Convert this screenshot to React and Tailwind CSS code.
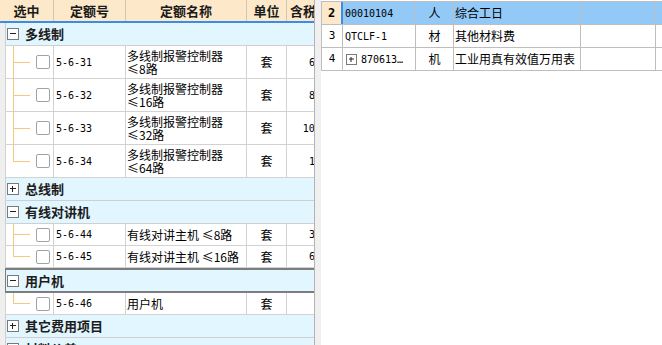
import React from 'react';

const groups = [
  {
    name: '多线制',
    open: true,
    items: [
      { code: '5-6-31', name: ['多线制报警控制器', '≤8路'], unit: '套', price: '658.00' },
      { code: '5-6-32', name: ['多线制报警控制器', '≤16路'], unit: '套', price: '865.00' },
      { code: '5-6-33', name: ['多线制报警控制器', '≤32路'], unit: '套', price: '1058.00' },
      { code: '5-6-34', name: ['多线制报警控制器', '≤64路'], unit: '套', price: '158.00' },
    ],
  },
  { name: '总线制', open: false, items: [] },
  {
    name: '有线对讲机',
    open: true,
    items: [
      { code: '5-6-44', name: ['有线对讲主机 ≤8路'], unit: '套', price: '358.00' },
      { code: '5-6-45', name: ['有线对讲主机 ≤16路'], unit: '套', price: '658.00' },
    ],
  },
  {
    name: '用户机',
    open: true,
    focused: true,
    items: [{ code: '5-6-46', name: ['用户机'], unit: '套', price: '' }],
  },
  { name: '其它费用项目', open: false, items: [] },
  { name: '材料价差', open: false, items: [] },
];

const resources = [
  { idx: '2', code: '00010104', type: '人', name: '综合工日', selected: true },
  { idx: '3', code: 'QTCLF-1', type: '材', name: '其他材料费' },
  { idx: '4', code: '870613…', type: '机', name: '工业用真有效值万用表', expand: true },
];

const Expander = ({ open, size = 12 }) => (
  <svg width={size} height={size} viewBox={`0 0 ${size} ${size}`} className="shrink-0">
    <rect x="0.5" y="0.5" width={size - 1} height={size - 1} fill="#fff" stroke="#7a7a7a" />
    <line x1="3" y1={size / 2 - 0.5} x2={size - 3} y2={size / 2 - 0.5} stroke="#222" />
    {!open && <line x1={size / 2 - 0.5} y1="3" x2={size / 2 - 0.5} y2={size - 3} stroke="#222" />}
  </svg>
);

const TreeLink = ({ last }) => (
  <div className="flex flex-col w-[17px] ml-[7px] self-stretch shrink-0">
    <div className="flex-1 border-l border-b border-[#f8c77e]" />
    <div className={last ? 'flex-1' : 'flex-1 border-l border-[#f8c77e]'} />
  </div>
);

const GroupRow = ({ group }) => (
  <div
    className={
      group.focused
        ? 'flex items-center h-[25px] shrink-0 border-t-2 border-b-2 border-l border-[#7d7d7d] bg-[#e1f6fe] pl-px'
        : 'flex items-center h-[23px] shrink-0 border-b border-l border-[#cfcfcf] bg-[#e1f6fe] pl-px'
    }
  >
    <Expander open={group.open} />
    <span className="ml-[6px] text-[13px] font-bold text-[#1c1c1c] whitespace-nowrap">{group.name}</span>
  </div>
);

const ItemRow = ({ item, last }) => {
  const tall = item.name.length > 1;
  return (
    <div
      className={
        tall
          ? 'flex h-[33px] shrink-0 border-b border-l border-[#d2d2d2] bg-white'
          : 'flex h-[22px] shrink-0 border-b border-l border-[#d2d2d2] bg-white'
      }
    >
      <div className="flex items-center w-[48px] shrink-0 border-r border-[#d2d2d2]">
        <TreeLink last={last} />
        <div className="ml-[6px] w-[14px] h-[14px] rounded-[2px] border border-[#a3a3a3] bg-white" />
      </div>
      <div className="flex items-center w-[72px] shrink-0 border-r border-[#d2d2d2] pl-[2px] font-['DejaVu_Sans_Mono',monospace] text-[10px] text-black">
        {item.code}
      </div>
      <div className="flex flex-col justify-center w-[121px] shrink-0 border-r border-[#d2d2d2] pl-px text-[12px] leading-[13px] text-black">
        {item.name.map((line) => (
          <span key={line} className="whitespace-nowrap">{line}</span>
        ))}
      </div>
      <div className="flex items-center justify-center w-[40px] shrink-0 border-r border-[#d2d2d2] text-[12px] text-black">
        {item.unit}
      </div>
      <div className="flex items-center justify-end w-[60px] shrink-0 pr-[2px] font-['DejaVu_Sans_Mono',monospace] text-[10px] text-black">
        {item.price}
      </div>
    </div>
  );
};

const LeftGrid = () => (
  <div className="flex flex-col w-[315px] shrink-0 h-full overflow-hidden border-r border-[#b3b3b3]">
    <div className="flex h-[23px] shrink-0 bg-[#fde9c9] border-b-2 border-[#3a8de6] text-[13px] font-bold text-[#1a1a1a]">
      <div className="flex items-center justify-center w-[54px] shrink-0 border-r border-[#d3c6b0]">选中</div>
      <div className="flex items-center justify-center w-[72px] shrink-0 border-r border-[#d3c6b0]">定额号</div>
      <div className="flex items-center justify-center w-[121px] shrink-0 border-r border-[#d3c6b0]">定额名称</div>
      <div className="flex items-center justify-center w-[40px] shrink-0 border-r border-[#d3c6b0]">单位</div>
      <div className="flex items-center pl-[3px] whitespace-nowrap">含税单价</div>
    </div>
    <div className="flex flex-1 min-h-0">
      <div className="w-[5px] shrink-0 bg-[#efefef]" />
      <div className="flex flex-col flex-1 min-w-0">
        {groups.map((g) => (
          <React.Fragment key={g.name}>
            <GroupRow group={g} />
            {g.open &&
              g.items.map((item, i) => (
                <ItemRow key={item.code} item={item} last={i === g.items.length - 1} />
              ))}
          </React.Fragment>
        ))}
      </div>
    </div>
  </div>
);

const RightGrid = () => (
  <div className="flex-1 min-w-0 pt-px">
    <div className="border-t border-l border-[#bebebe] text-[12px] text-black">
      {resources.map((r) => (
        <div
          key={r.idx}
          className={
            r.selected
              ? 'flex h-[23px] border-b border-[#bebebe] bg-[#93c9f7]'
              : 'flex h-[23px] border-b border-[#bebebe] bg-white'
          }
        >
          <div
            className={
              r.selected
                ? "flex items-center justify-center w-[21px] shrink-0 bg-[#fde9c9] border-r-2 border-[#3a8de6] font-bold font-['DejaVu_Sans_Mono',monospace] text-[12px]"
                : "flex items-center justify-center w-[21px] shrink-0 border-r border-[#bebebe] font-['DejaVu_Sans_Mono',monospace] text-[11px]"
            }
          >
            {r.idx}
          </div>
          <div className="flex items-center w-[73px] shrink-0 border-r border-[#bebebe] pl-[2px] font-['DejaVu_Sans_Mono',monospace] text-[10px] whitespace-nowrap overflow-hidden">
            {r.expand && (
              <span className="mr-[4px] ml-px flex">
                <Expander open={false} size={11} />
              </span>
            )}
            {r.code}
          </div>
          <div className="flex items-center justify-center w-[38px] shrink-0 border-r border-[#bebebe]">{r.type}</div>
          <div className="flex items-center w-[127px] shrink-0 border-r border-[#bebebe] pl-px whitespace-nowrap">
            {r.name}
          </div>
          <div className="w-[75px] shrink-0 border-r border-[#bebebe]" />
          <div className="flex-1" />
        </div>
      ))}
    </div>
  </div>
);

export default function App() {
  return (
    <div className="flex w-[662px] h-[345px] overflow-hidden bg-white font-['Noto_Sans_CJK_SC',sans-serif]">
      <LeftGrid />
      <div className="w-[6px] shrink-0 bg-[#f0f0f0]" />
      <RightGrid />
    </div>
  );
}
